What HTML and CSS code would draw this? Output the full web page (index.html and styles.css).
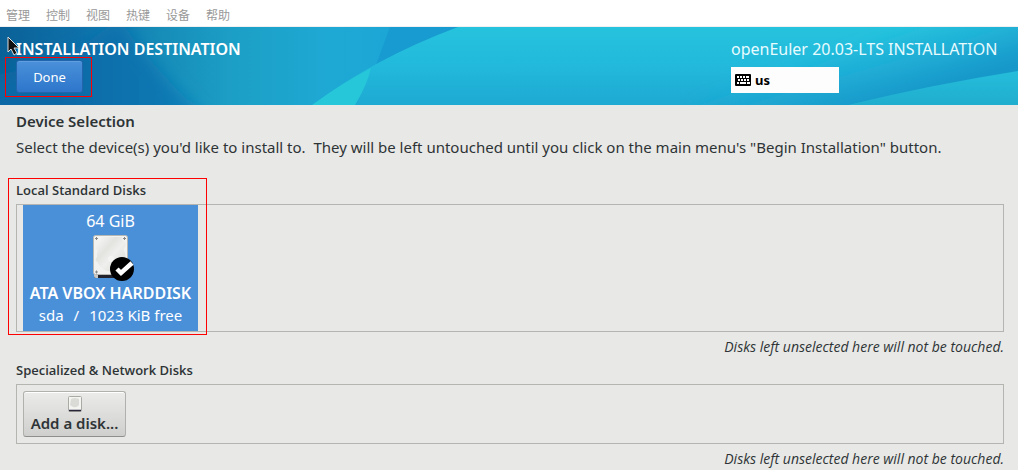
FILE: index.html
```
<!DOCTYPE html>
<html lang="en">
<head>
<meta charset="utf-8">
<title>Installation Destination</title>
<link rel="stylesheet" href="styles.css">
</head>
<body>
<nav class="menubar" lang="zh-CN">
  <button type="button">管理</button>
  <button type="button">控制</button>
  <button type="button">视图</button>
  <button type="button">热键</button>
  <button type="button">设备</button>
  <button type="button">帮助</button>
</nav>
<header class="banner">
  <svg class="banner-art" viewBox="0 0 1018 78" preserveAspectRatio="none" aria-hidden="true">
    <defs>
      <linearGradient id="base" gradientUnits="userSpaceOnUse" x1="0" y1="0" x2="390" y2="0">
        <stop offset="0" stop-color="#0a6197"/><stop offset=".2" stop-color="#0e70a9"/><stop offset=".4" stop-color="#168bb8"/><stop offset=".6" stop-color="#1c9fc6"/><stop offset=".85" stop-color="#1ea9d4"/><stop offset="1" stop-color="#1ca6d6"/>
      </linearGradient>
      <linearGradient id="low" gradientUnits="userSpaceOnUse" x1="60" y1="78" x2="250" y2="78">
        <stop offset="0" stop-color="#0b69a5"/><stop offset=".5" stop-color="#0e76b1"/><stop offset="1" stop-color="#1890c4"/>
      </linearGradient>
      <linearGradient id="sweep" x1="0" y1="0" x2="0" y2="1">
        <stop offset="0" stop-color="#26c3dd"/><stop offset=".5" stop-color="#22b9dc"/><stop offset="1" stop-color="#1ea9d2"/>
      </linearGradient>
      <linearGradient id="right" gradientUnits="userSpaceOnUse" x1="850" y1="5" x2="872" y2="78">
        <stop offset="0" stop-color="#1fb3da" stop-opacity="0"/><stop offset="1" stop-color="#1898c9"/>
      </linearGradient>
      <linearGradient id="corner" x1="0" y1="0" x2="0" y2="1">
        <stop offset="0" stop-color="#25bddb"/><stop offset="1" stop-color="#20adce"/>
      </linearGradient>
      <filter id="soft" x="-20%" y="-20%" width="140%" height="140%"><feGaussianBlur stdDeviation="8"/></filter>
    </defs>
    <rect width="1018" height="78" fill="url(#base)"/>
    <path d="M-20 110V50Q70 40 118 -10Q150 40 225 110Z" fill="url(#low)" filter="url(#soft)"/>
    <path d="M390 0H460L376 38Z" fill="#189bd0"/>
    <path d="M312 78Q375 31 458 0H1018V78Z" fill="url(#sweep)"/>
    <path d="M312 78Q342 56 371 41Q367 58 355 78Z" fill="#27c7da"/>
    <path d="M700 78Q830 34 980 -20H1040V98H700Z" fill="url(#right)" filter="url(#soft)"/>
    <path d="M848 78Q930 58 1018 44V78Z" fill="url(#corner)"/>
  </svg>
  <div class="banner-left">
    <h1>INSTALLATION DESTINATION</h1>
    <button type="button" class="done">Done</button>
  </div>
  <div class="banner-right">
    <p class="product">openEuler 20.03-LTS INSTALLATION</p>
    <button type="button" class="keyboard">
      <svg width="16" height="12" viewBox="0 0 16 12" aria-hidden="true">
        <rect width="16" height="12" rx="1"/>
        <path d="M2 3h2M5 3h2M8 3h2M11 3h3M3 6h2M6 6h2M9 6h2M12 6h2M2 9h2M5 9h6M12 9h3" stroke="#fff" stroke-width="2"/>
      </svg>
      <span>us</span>
    </button>
  </div>
  <svg class="pointer" width="13" height="20" viewBox="0 0 13 20" aria-hidden="true">
    <path d="M1 1V16L4 13L7 19L10 17L7 12H12Z" fill="#111" stroke="#ddd" stroke-width="1"/>
  </svg>
</header>
<main class="content">
  <h2 class="heading">Device Selection</h2>
  <p class="intro">Select the device(s) you'd like to install to.&nbsp; They will be left untouched until you click on the main menu's "Begin Installation" button.</p>
  <section class="group local">
    <h3>Local Standard Disks</h3>
    <div class="disks">
      <button type="button" class="disk" aria-pressed="true">
        <span class="size">64 GiB</span>
        <svg width="50" height="50" viewBox="0 0 50 50" aria-hidden="true">
          <defs>
            <linearGradient id="metal" x1="0" y1="0" x2="1" y2="1"><stop offset="0" stop-color="#fafafa"/><stop offset=".35" stop-color="#e3e3e0"/><stop offset=".55" stop-color="#efefed"/><stop offset="1" stop-color="#d5d5d1"/></linearGradient>
          </defs>
          <path d="M8 41H42V44Q42 46 40 46H10Q8 46 8 44Z" fill="#22222c"/>
          <path d="M8 41H12V46H10Q8 46 8 44Z" fill="#c8c8c6"/>
          <rect x="7.500" y="3.500" width="34" height="39" rx="2" fill="#f2f2f0" stroke="#b8b7b2"/>
          <path d="M13 5H36Q36 9 39 10Q41 13 38 16Q37 18 39 21Q42 35 30 39Q18 41 13 33Q12 30 10 29Q9 27 11 25V21Q13 18 10 17Q9 12 12 10Q13 8 13 5Z" fill="url(#metal)"/>
          <circle cx="25" cy="27" r="3" fill="#f4f4f2"/>
          <path d="M9 6.500h3M10.500 5v3M37 6.500h3M38.500 5v3M9 40h3M10.500 38.500v3" stroke="#888"/>
          <circle cx="36" cy="37" r="12" fill="#000"/>
          <path d="M31 37L35 41L46 31" fill="none" stroke="#fff" stroke-width="4.500"/>
        </svg>
        <strong>ATA VBOX HARDDISK</strong>
        <span class="usage"><span>sda</span><span>/</span><span>1023 KiB free</span></span>
      </button>
    </div>
  </section>
  <p class="note">Disks left unselected here will not be touched.</p>
  <section class="group">
    <h3>Specialized &amp; Network Disks</h3>
    <div class="disks special">
      <button type="button" class="add">
        <svg width="14" height="16" viewBox="0 0 14 16" aria-hidden="true">
          <rect x=".5" y=".5" width="13" height="15" rx="1" fill="#f4f4f2" stroke="#aaa9a4"/>
          <path d="M3 3Q7 1 11 3V9Q9 12 5 11L2 9Z" fill="#dadad6"/>
          <path d="M1 14.500H13" stroke="#262638" stroke-width="1.500"/>
        </svg>
        <span>Add a disk...</span>
      </button>
    </div>
  </section>
  <p class="note">Disks left unselected here will not be touched.</p>
</main>
</body>
</html>
```
FILE: styles.css
```
*, *::after { box-sizing: border-box; }
body {
  margin: 0;
  background: #e8e8e6;
  color: #2e3436;
  font: 15px/22px "Noto Sans", "Open Sans", sans-serif;
}
h1, h2, h3, p { margin: 0; }
button { margin: 0; font: inherit; color: inherit; border: 0; }
svg { display: block; }

.menubar {
  display: flex;
  gap: 16px;
  padding: 4px 6px 0;
  height: 27px;
  background: #fff;
  border-bottom: 1px solid #f0f0f0;
}
.menubar button {
  padding: 0;
  background: none;
  color: #999;
  font: 12px/20px "Noto Sans CJK SC", sans-serif;
}

.banner {
  position: relative;
  display: flex;
  justify-content: space-between;
  padding: 11px 14px 12px 16px;
  color: #fff;
}
.banner-art { position: absolute; inset: 0; width: 100%; height: 100%; }
.banner-left, .banner-right { position: relative; }
.banner-right { min-width: 273px; }
.banner h1 { font-size: 16px; line-height: 22px; font-weight: 600; }
.done {
  display: block;
  width: 67px;
  height: 33px;
  border: 1px solid #2265ad;
  border-radius: 3px;
  background: linear-gradient(#4a90d9, #2d76cb);
  box-shadow: inset 0 1px #5f9fe0;
  font-size: 13px;
}
.done::after {
  content: "";
  position: absolute;
  left: -11px;
  top: 19px;
  width: 87px;
  height: 40px;
  border: 1px solid #f00;
}
.product { color: #e8fbff; font-size: 16px; line-height: 22px; }
.keyboard {
  display: flex;
  align-items: center;
  gap: 4px;
  width: 108px;
  height: 26px;
  margin-top: 7px;
  padding: 0 4px;
  background: #fdfdfd;
  color: #000;
  font-size: 13px;
  font-weight: 700;
}
.pointer { position: absolute; left: 7px; top: 9px; }

.content { padding: 5px 14px 0 16px; }
.heading { font-size: 15px; line-height: 22px; font-weight: 600; }
.intro { margin: 4px 0 22px; }
.group { position: relative; }
.group h3 { padding-bottom: 4px; font: 600 13px/20px "Open Sans", sans-serif; }
.local::after {
  content: "";
  position: absolute;
  left: -8px;
  top: -2px;
  bottom: -3px;
  width: 199px;
  border: 1px solid #f00;
}
.disks { display: flex; padding: 0 6px; border: 1px solid #b4b4b1; }
.disk {
  display: flex;
  flex-direction: column;
  align-items: center;
  width: 175px;
  padding: 5px 0;
  background: #4a90d9;
  color: #fff;
}
.size { font-size: 16px; }
.disk strong { font-size: 16px; font-weight: 600; white-space: nowrap; }
.usage { display: flex; gap: 10px; white-space: nowrap; }
.special { padding: 6px; }
.add {
  display: flex;
  flex-direction: column;
  align-items: center;
  width: 103px;
  padding: 4px 0 2px;
  border: 1px solid #b0b0ad;
  border-bottom-color: #8f8f8c;
  border-radius: 3px;
  background: linear-gradient(#ebebe9, #cfcfcd);
  box-shadow: inset 0 1px #fff;
  font-weight: 600;
  white-space: nowrap;
}
.note { padding: 5px 0 3px; font: italic 14px/20px "Open Sans", sans-serif; text-align: right; }
```
